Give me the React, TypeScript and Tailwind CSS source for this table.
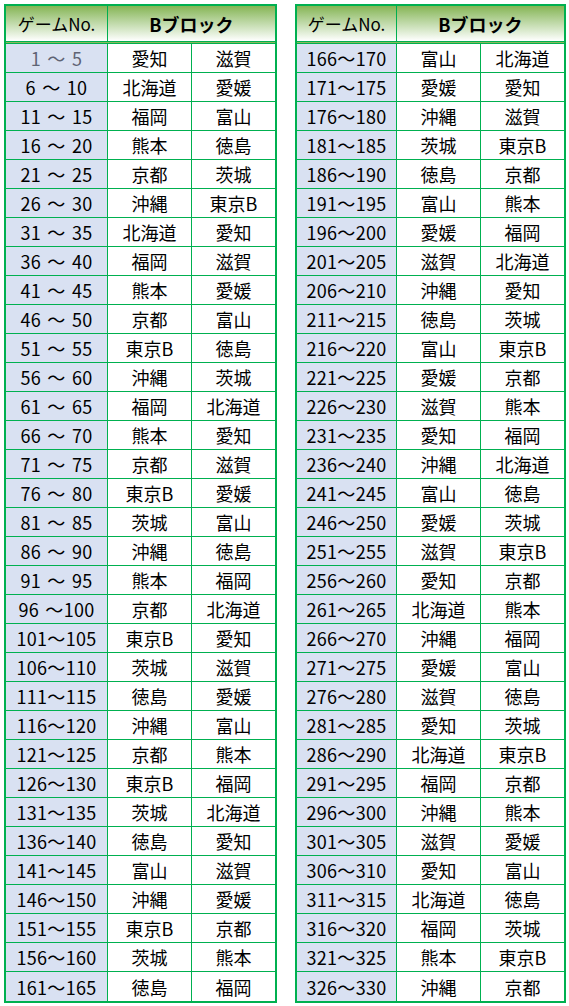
const S = '\u2004';

const left: [string, string, string][] = [
  [`1${S}～${S}5`, '愛知', '滋賀'],
  [`6${S}～${S}10`, '北海道', '愛媛'],
  [`11${S}～${S}15`, '福岡', '富山'],
  [`16${S}～${S}20`, '熊本', '徳島'],
  [`21${S}～${S}25`, '京都', '茨城'],
  [`26${S}～${S}30`, '沖縄', '東京B'],
  [`31${S}～${S}35`, '北海道', '愛知'],
  [`36${S}～${S}40`, '福岡', '滋賀'],
  [`41${S}～${S}45`, '熊本', '愛媛'],
  [`46${S}～${S}50`, '京都', '富山'],
  [`51${S}～${S}55`, '東京B', '徳島'],
  [`56${S}～${S}60`, '沖縄', '茨城'],
  [`61${S}～${S}65`, '福岡', '北海道'],
  [`66${S}～${S}70`, '熊本', '愛知'],
  [`71${S}～${S}75`, '京都', '滋賀'],
  [`76${S}～${S}80`, '東京B', '愛媛'],
  [`81${S}～${S}85`, '茨城', '富山'],
  [`86${S}～${S}90`, '沖縄', '徳島'],
  [`91${S}～${S}95`, '熊本', '福岡'],
  [`96${S}～100`, '京都', '北海道'],
  ['101～105', '東京B', '愛知'],
  ['106～110', '茨城', '滋賀'],
  ['111～115', '徳島', '愛媛'],
  ['116～120', '沖縄', '富山'],
  ['121～125', '京都', '熊本'],
  ['126～130', '東京B', '福岡'],
  ['131～135', '茨城', '北海道'],
  ['136～140', '徳島', '愛知'],
  ['141～145', '富山', '滋賀'],
  ['146～150', '沖縄', '愛媛'],
  ['151～155', '東京B', '京都'],
  ['156～160', '茨城', '熊本'],
  ['161～165', '徳島', '福岡'],
];

const right: [string, string, string][] = [
  ['166～170', '富山', '北海道'],
  ['171～175', '愛媛', '愛知'],
  ['176～180', '沖縄', '滋賀'],
  ['181～185', '茨城', '東京B'],
  ['186～190', '徳島', '京都'],
  ['191～195', '富山', '熊本'],
  ['196～200', '愛媛', '福岡'],
  ['201～205', '滋賀', '北海道'],
  ['206～210', '沖縄', '愛知'],
  ['211～215', '徳島', '茨城'],
  ['216～220', '富山', '東京B'],
  ['221～225', '愛媛', '京都'],
  ['226～230', '滋賀', '熊本'],
  ['231～235', '愛知', '福岡'],
  ['236～240', '沖縄', '北海道'],
  ['241～245', '富山', '徳島'],
  ['246～250', '愛媛', '茨城'],
  ['251～255', '滋賀', '東京B'],
  ['256～260', '愛知', '京都'],
  ['261～265', '北海道', '熊本'],
  ['266～270', '沖縄', '福岡'],
  ['271～275', '愛媛', '富山'],
  ['276～280', '滋賀', '徳島'],
  ['281～285', '愛知', '茨城'],
  ['286～290', '北海道', '東京B'],
  ['291～295', '福岡', '京都'],
  ['296～300', '沖縄', '熊本'],
  ['301～305', '滋賀', '愛媛'],
  ['306～310', '愛知', '富山'],
  ['311～315', '北海道', '徳島'],
  ['316～320', '福岡', '茨城'],
  ['321～325', '熊本', '東京B'],
  ['326～330', '沖縄', '京都'],
];

function ScheduleTable({
  rows,
  firstWidth,
  dimFirst = false,
}: {
  rows: [string, string, string][];
  firstWidth: string;
  dimFirst?: boolean;
}) {
  return (
    <div className="border-2 border-[#00b050] bg-white">
      <div className="flex h-[38px] border-b-[3px] border-double border-[#00b050] bg-gradient-to-b from-[#86b553] to-white">
        <div className={`${firstWidth} flex items-center justify-center border-r border-[#00b050] text-[17px]`}>
          ゲームNo.
        </div>
        <div className="flex flex-1 items-center justify-center text-[18px] font-bold">Bブロック</div>
      </div>
      {rows.map(([no, a, b], i) => (
        <div
          key={no}
          className={`flex h-[29px] ${i < rows.length - 1 ? 'border-b border-[#00b050]' : ''}`}
        >
          <div
            className={`${firstWidth} flex items-center justify-center whitespace-pre border-r border-[#00b050] bg-[#d9e1f2] tracking-[0.3px] ${
              dimFirst && i === 0 ? 'text-[#5f6475]' : 'text-black'
            }`}
          >
            {no}
          </div>
          <div className="flex w-[84px] items-center justify-center border-r border-[#00b050]">{a}</div>
          <div className="flex w-[83px] items-center justify-center">{b}</div>
        </div>
      ))}
    </div>
  );
}

export default function App() {
  return (
    <div
      className="flex min-h-[1006px] gap-[18px] bg-white pl-[4px] pt-[4px] text-[18px] leading-none text-black"
      style={{ fontFamily: '"Noto Sans CJK JP", "Noto Sans", sans-serif' }}
    >
      <div className="w-[273px]">
        <ScheduleTable rows={left} firstWidth="w-[102px]" dimFirst />
      </div>
      <div className="w-[271px]">
        <ScheduleTable rows={right} firstWidth="w-[100px]" />
      </div>
    </div>
  );
}
